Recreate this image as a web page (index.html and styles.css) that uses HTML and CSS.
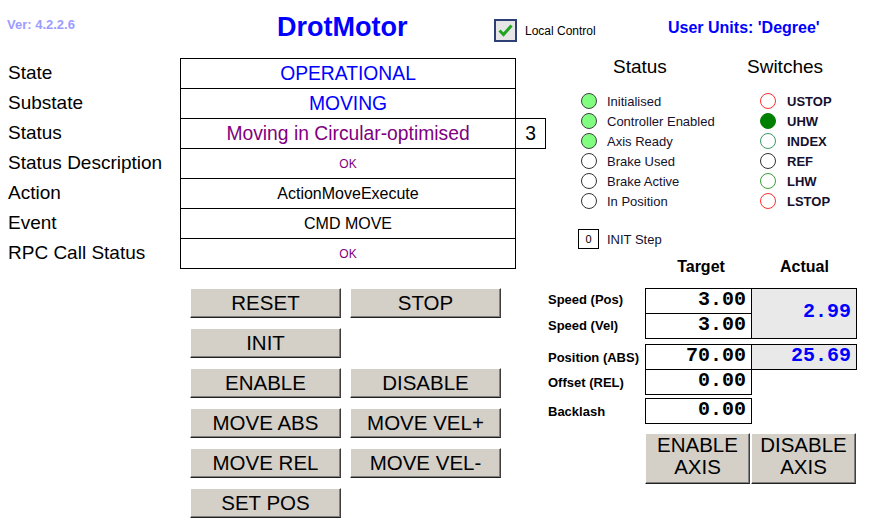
FILE: index.html
```html
<!DOCTYPE html>
<html lang="en">
<head>
    <meta charset="UTF-8">
    <title>DrotMotor</title>
    <link rel="stylesheet" href="styles.css">
</head>
<body>
    <div class="header">
        <div class="ver">Ver: 4.2.2.6</div>
        <div class="title">DrotMotor</div>
        <div class="local">
            <span class="checkbox">
                <svg width="15" height="13" viewBox="0 0 15 13"><path d="M1.5 6.5 L5.5 10.5 L13.5 1.5" fill="none" stroke="#21a421" stroke-width="3"/></svg>
            </span>
            <span>Local Control</span>
        </div>
        <div class="units">User Units: 'Degree'</div>
    </div>

    <div class="main">
        <div class="left">
            <div class="info">
                <div class="row"><div class="label">State</div><div class="cell blue big">OPERATIONAL</div></div>
                <div class="row"><div class="label">Substate</div><div class="cell blue big">MOVING</div></div>
                <div class="row"><div class="label">Status</div><div class="cell purple big">Moving in Circular-optimised</div><div class="cell extra big">3</div></div>
                <div class="row"><div class="label">Status Description</div><div class="cell purple small">OK</div></div>
                <div class="row"><div class="label">Action</div><div class="cell mid">ActionMoveExecute</div></div>
                <div class="row"><div class="label">Event</div><div class="cell mid">CMD MOVE</div></div>
                <div class="row"><div class="label">RPC Call Status</div><div class="cell purple small">OK</div></div>
            </div>

            <div class="buttons">
                <button class="btn">RESET</button>
                <button class="btn">STOP</button>
                <button class="btn">INIT</button>
                <div></div>
                <button class="btn">ENABLE</button>
                <button class="btn">DISABLE</button>
                <button class="btn">MOVE ABS</button>
                <button class="btn">MOVE VEL+</button>
                <button class="btn">MOVE REL</button>
                <button class="btn">MOVE VEL-</button>
                <button class="btn">SET POS</button>
            </div>
        </div>

        <div class="right">
            <div class="lamps">
                <div class="lamp-col status-col">
                    <div class="lamp-head">Status</div>
                    <div class="lamp"><span class="dot on"></span>Initialised</div>
                    <div class="lamp"><span class="dot on"></span>Controller Enabled</div>
                    <div class="lamp"><span class="dot on"></span>Axis Ready</div>
                    <div class="lamp"><span class="dot"></span>Brake Used</div>
                    <div class="lamp"><span class="dot"></span>Brake Active</div>
                    <div class="lamp"><span class="dot"></span>In Position</div>
                </div>
                <div class="lamp-col switch-col">
                    <div class="lamp-head">Switches</div>
                    <div class="lamp"><span class="dot red"></span>USTOP</div>
                    <div class="lamp"><span class="dot full"></span>UHW</div>
                    <div class="lamp"><span class="dot teal"></span>INDEX</div>
                    <div class="lamp"><span class="dot"></span>REF</div>
                    <div class="lamp"><span class="dot green"></span>LHW</div>
                    <div class="lamp"><span class="dot red"></span>LSTOP</div>
                </div>
            </div>

            <div class="init">
                <span class="init-box">0</span>
                <span>INIT Step</span>
            </div>

            <div class="values">
                <div class="col-head target-head">Target</div>
                <div class="col-head actual-head">Actual</div>

                <div class="vlabel r-spos">Speed (Pos)</div>
                <div class="box r-spos c-target">3.00</div>
                <div class="vlabel r-svel">Speed (Vel)</div>
                <div class="box r-svel c-target">3.00</div>
                <div class="box actual r-speed c-actual">2.99</div>

                <div class="vlabel r-pos">Position (ABS)</div>
                <div class="box r-pos c-target">70.00</div>
                <div class="box actual r-pos c-actual">25.69</div>

                <div class="vlabel r-off">Offset (REL)</div>
                <div class="box r-off c-target">0.00</div>

                <div class="vlabel r-back">Backlash</div>
                <div class="box r-back c-target">0.00</div>

                <div class="axis-buttons">
                    <button class="btn axis">ENABLE<br>AXIS</button>
                    <button class="btn axis">DISABLE<br>AXIS</button>
                </div>
            </div>
        </div>
    </div>
</body>
</html>
```

FILE: styles.css
```css
body {
    margin: 0;
    padding: 0;
    background-color: #fff;
    font-family: "Liberation Sans", Arial, sans-serif;
    color: #000;
}

.header {
    display: flex;
    align-items: center;
    height: 55px;
}

.ver {
    width: 277px;
    box-sizing: border-box;
    padding-left: 7px;
    margin-top: -6px;
    font-size: 13px;
    font-weight: bold;
    color: #9c9cff;
}

.title {
    width: 217px;
    font-size: 27px;
    font-weight: bold;
    color: #0000ff;
}

.local {
    width: 174px;
    display: flex;
    align-items: center;
    margin-top: 6px;
    font-size: 12px;
}

.checkbox {
    width: 23px;
    height: 23px;
    box-sizing: border-box;
    border: 2px solid #2d3f73;
    background-color: #e6e6e6;
    display: flex;
    align-items: center;
    justify-content: center;
    margin-right: 8px;
}

.units {
    font-size: 16px;
    font-weight: bold;
    color: #0000ff;
}

.main {
    display: flex;
}

.left {
    width: 548px;
}

/* state table */
.info {
    margin-top: 3px;
}

.row {
    display: flex;
    height: 30px;
}

.label {
    width: 180px;
    box-sizing: border-box;
    padding-left: 8px;
    line-height: 29px;
    font-size: 19px;
}

.cell {
    width: 336px;
    height: 31px;
    box-sizing: border-box;
    border: 1px solid #000;
    display: flex;
    align-items: center;
    justify-content: center;
}

.cell.extra {
    width: 31px;
    margin-left: -1px;
}

.big { font-size: 19.3px; }
.mid { font-size: 16px; }
.small { font-size: 12px; }
.blue { color: #0000ff; }
.purple { color: #800080; }

/* buttons */
.buttons {
    display: grid;
    grid-template-columns: 151px 151px;
    grid-auto-rows: 30px;
    column-gap: 9px;
    row-gap: 10px;
    margin: 20px 0 0 190px;
}

.btn {
    font-family: "Liberation Sans", Arial, sans-serif;
    font-size: 20.5px;
    color: #000;
    background-color: #d4d0c8;
    border: 1px solid;
    border-color: #fff #404040 #202020 #fff;
    box-shadow: inset -1px -1px 0 #808080;
    padding: 0 0 1px 0;
    cursor: pointer;
}

/* lamps */
.lamps {
    display: flex;
}

.lamp-col {
    display: flex;
    flex-direction: column;
}

.status-col {
    width: 199px;
    padding-left: 33px;
    box-sizing: border-box;
}

.status-col .lamp-head {
    margin-left: 32px;
}

.switch-col .lamp {
    padding-left: 13px;
    font-weight: bold;
}

.lamp-head {
    font-size: 19px;
    line-height: 24px;
    height: 24px;
    margin-bottom: 12px;
}

.lamp {
    display: flex;
    align-items: center;
    height: 20px;
    font-size: 13px;
    color: #14102e;
}

.dot {
    width: 16px;
    height: 16px;
    box-sizing: border-box;
    border-radius: 50%;
    border: 1px solid #333;
    background-color: #fff;
    margin-right: 10px;
}

.switch-col .dot {
    margin-right: 11px;
}

.dot.on { background-color: #80ff80; border-color: #404040; }
.dot.full { background-color: #008000; border-color: #008000; }
.dot.red { border-color: #ff3030; }
.dot.teal { border-color: #3a9a66; }
.dot.green { border-color: #38a038; }

/* init step */
.init {
    display: flex;
    align-items: center;
    margin: 18px 0 0 30px;
    font-size: 13px;
    color: #14102e;
}

.init-box {
    width: 21px;
    height: 20px;
    box-sizing: border-box;
    border: 1px solid #000;
    font-size: 11px;
    display: flex;
    align-items: center;
    justify-content: center;
    margin-right: 8px;
    color: #000;
}

/* values */
.values {
    display: grid;
    grid-template-columns: 97px 106px 105px;
    grid-template-rows: 39px 25px 25px 6px 25px 25px 4px 25px 10px 51px;
}

.col-head {
    grid-row: 1;
    font-size: 16px;
    font-weight: bold;
    line-height: 20px;
    padding-top: 8px;
    text-align: center;
}

.target-head { grid-column: 2; margin-left: 6px; }
.actual-head { grid-column: 3; margin-left: 2px; }

.vlabel {
    grid-column: 1;
    font-size: 13px;
    font-weight: bold;
    line-height: 25px;
    white-space: nowrap;
}

.vlabel.r-spos { line-height: 23px; }
.vlabel.r-pos, .vlabel.r-off, .vlabel.r-back { line-height: 27px; }

.box {
    width: calc(100% + 1px);
    height: calc(100% + 1px);
    box-sizing: border-box;
    border: 1px solid #000;
    font-family: "Liberation Mono", "Courier New", monospace;
    font-weight: bold;
    font-size: 20px;
    line-height: 22px;
    text-align: right;
    padding-right: 5px;
}

.box.actual {
    background-color: #e9e9e9;
    color: #0000ff;
}

.c-target { grid-column: 2; }
.c-actual { grid-column: 3; }
.r-spos { grid-row: 2; }
.r-svel { grid-row: 3; }
.r-speed { grid-row: 2 / 4; display: flex; align-items: center; justify-content: flex-end; padding-bottom: 3px; }
.r-pos { grid-row: 5; }
.r-off { grid-row: 6; }
.r-back { grid-row: 8; }

.axis-buttons {
    grid-row: 10;
    grid-column: 2 / 4;
    display: flex;
    gap: 1px;
}

.btn.axis {
    width: 106px;
    height: 51px;
    line-height: 22px;
    padding-bottom: 6px;
}
```
